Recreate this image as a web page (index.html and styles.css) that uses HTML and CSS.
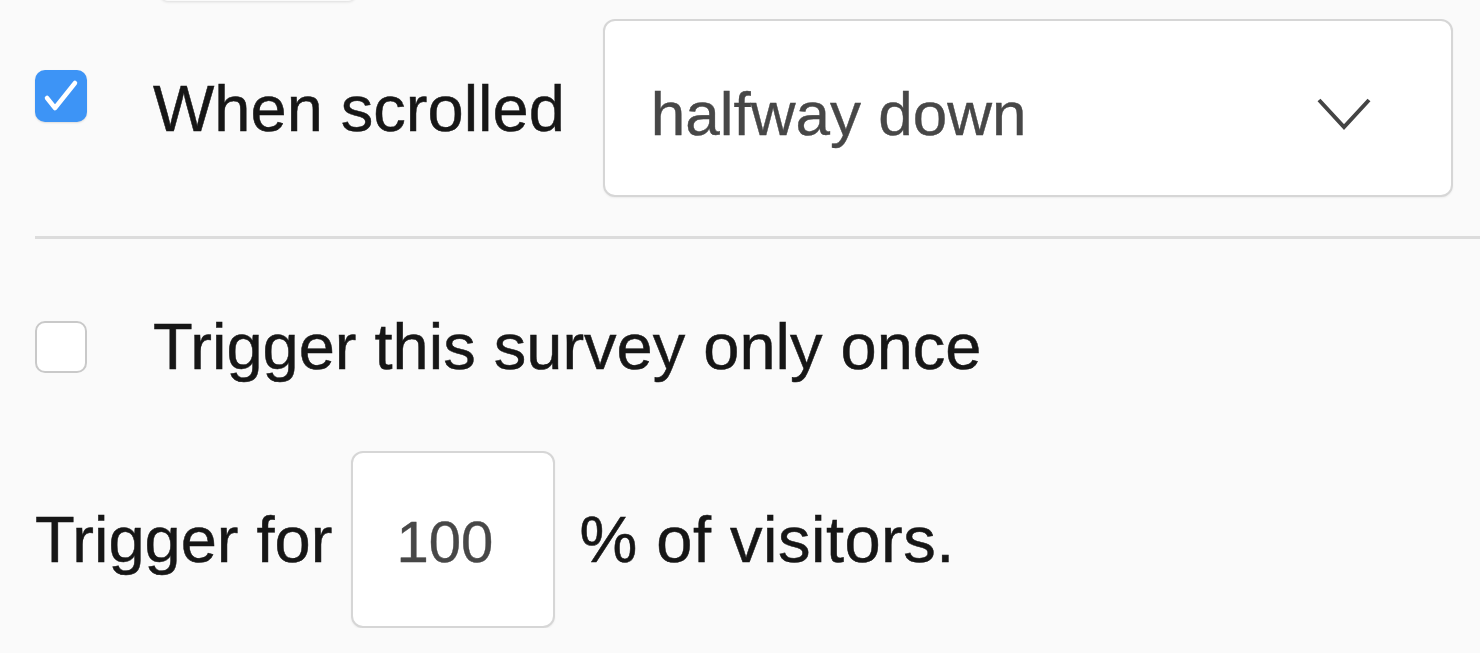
FILE: index.html
```html
<!DOCTYPE html>
<html lang="en">
<head>
  <meta charset="UTF-8" />
  <title>Survey trigger</title>
  <link rel="stylesheet" href="styles.css">
</head>
<body>
  <div class="settings">
    <div class="prev-field"></div>

    <div class="row scroll-row">
      <span class="check checked">
        <svg width="52" height="52" viewBox="0 0 52 52"><path d="M12 28 L20 38 L40 13" fill="none" stroke="#fff" stroke-width="4.5" stroke-linecap="round" stroke-linejoin="round"/></svg>
      </span>
      <span class="label">When scrolled</span>
      <div class="select">
        <span>halfway down</span>
        <svg class="chevron" width="54" height="32" viewBox="0 0 54 32"><path d="M2 2 L27 29 L52 2" fill="none" stroke="#444" stroke-width="4"/></svg>
      </div>
    </div>

    <hr class="divider">

    <div class="row once-row">
      <span class="check"></span>
      <span class="label">Trigger this survey only once</span>
    </div>

    <div class="row percent-row">
      <span>Trigger for</span>
      <input class="num" type="text" value="100">
      <span class="suffix">% of visitors.</span>
    </div>
  </div>
</body>
</html>
```

FILE: styles.css
```css
body {
  margin: 0;
  background: #fafafa;
  font-family: "Liberation Sans", Arial, sans-serif;
  color: #161616;
  overflow: hidden;
}
.settings {
  padding-left: 35px;
}
.prev-field {
  width: 196px;
  height: 30px;
  margin: -29px 0 0 125px;
  background: #fafafa;
  border-radius: 8px;
  box-shadow: 0 1px 3px rgba(0, 0, 0, 0.12);
}
.row {
  display: flex;
  align-items: center;
  font-size: 65px;
  -webkit-text-stroke: 0.5px #161616;
}
.scroll-row {
  margin-top: 18px;
  height: 178px;
}
.check {
  flex: none;
  width: 52px;
  height: 52px;
  box-sizing: border-box;
  border: 2px solid #c9c9c9;
  border-radius: 10px;
  background: #fff;
  margin-right: 66px;
}
.check.checked {
  border: none;
  background: #3d94f6;
  box-shadow: 0 1px 2px rgba(0, 0, 0, 0.12);
  align-self: flex-start;
  margin-top: 51px;
}
.check svg {
  display: block;
}
.select {
  flex: none;
  width: 850px;
  height: 178px;
  box-sizing: border-box;
  margin-left: 38px;
  padding: 11px 80px 0 46px;
  border: 2px solid #d6d6d6;
  border-radius: 12px;
  background: #fff;
  box-shadow: 0 1px 2px rgba(0, 0, 0, 0.06);
  display: flex;
  align-items: center;
  justify-content: space-between;
  font-size: 62px;
  color: #474747;
  -webkit-text-stroke: 0.4px #474747;
}
.chevron {
  margin-top: 1px;
}
.divider {
  margin: 39px 0 0;
  border: none;
  height: 3px;
  background: #dcdcdc;
}
.once-row {
  margin-top: 70px;
  line-height: 75px;
}
.percent-row {
  margin-top: 67px;
}
.num {
  width: 204px;
  height: 177px;
  box-sizing: border-box;
  margin: 0 24px 0 19px;
  padding: 4px 0 0 43px;
  border: 2px solid #d6d6d6;
  border-radius: 12px;
  background: #fff;
  box-shadow: 0 1px 2px rgba(0, 0, 0, 0.06);
  font-family: "Liberation Sans", Arial, sans-serif;
  font-size: 58px;
  color: #474747;
  -webkit-text-stroke: 0.4px #474747;
  outline: none;
}
.suffix {
  letter-spacing: 0.5px;
}
```
